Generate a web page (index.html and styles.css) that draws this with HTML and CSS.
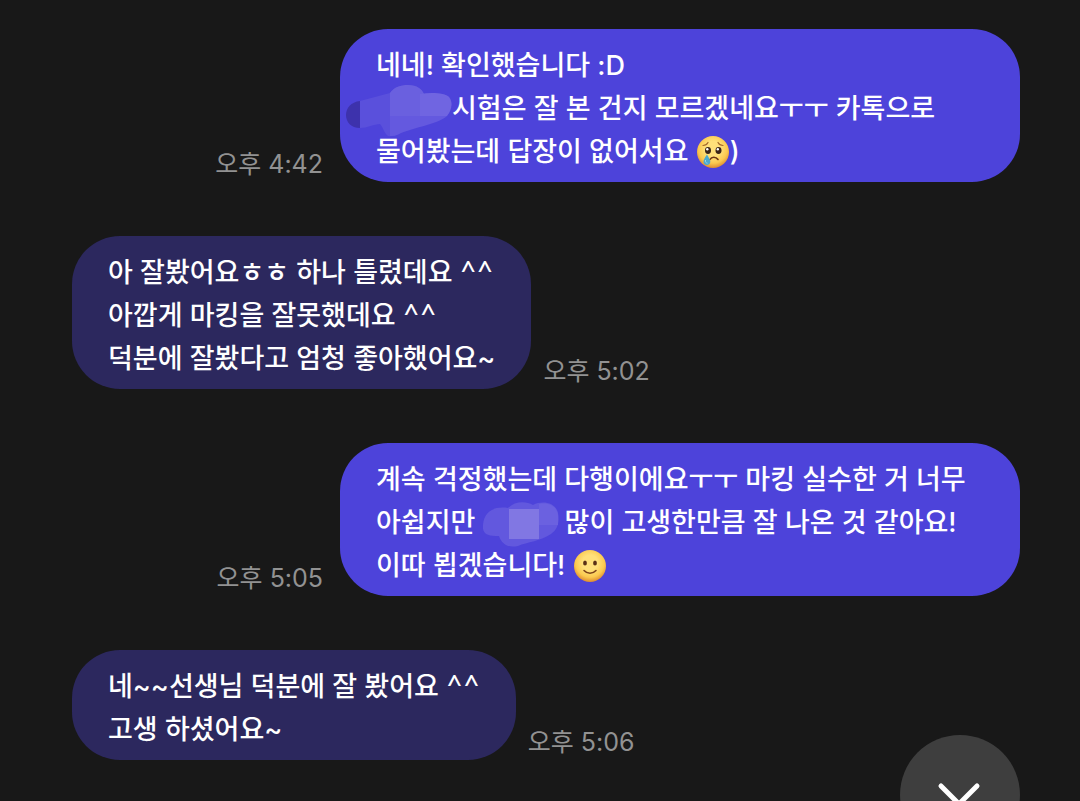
FILE: index.html
```html
<!DOCTYPE html>
<html lang="ko">
<head>
    <meta charset="UTF-8">
    <meta name="viewport" content="width=device-width, initial-scale=1.0">
    <title>채팅</title>
    <link rel="stylesheet" href="styles.css">
</head>
<body>
    <main class="chat">
        <div class="message mine">
            <p class="bubble">네네! 확인했습니다 :D<br><svg class="mask mask-start" viewBox="0 0 106 52" aria-hidden="true">
                    <path fill="#3d32ac" d="M14 16C5 17 0 23 0 30s5 13 14 13z"/>
                    <path fill="#5a50dc" d="M14 16L44 8c4-6 11-8 18-8 9 0 14 4 16 9 10-1 21-1 25 3 4 4 3 11-1 15-9 10-31 14-47 20-5 4-10 5-13 4-4-3-5-9-8-12-6 0-13 4-20 4z"/>
                    <path fill="#6a60df" d="M44 8c4-6 11-8 18-8 9 0 14 4 16 9l-4 2v20H44z"/>
                    <path fill="#7065e1" d="M74 9c12-2 25-1 29 3 4 5 3 13-2 19H74z"/>
                    <path fill="#6459df" d="M44 31h57c-9 8-31 11-46 17-5 3-8 3-11 3z"/>
                </svg>시험은 잘 본 건지 모르겠네요ㅜㅜ 카톡으로<br>물어봤는데 답장이 없어서요 <svg class="emoji" viewBox="0 0 32 32" role="img" aria-label="우는 얼굴">
                    <defs>
                        <radialGradient id="face" cx="0.5" cy="0.4" r="0.6">
                            <stop offset="0.4" stop-color="#ffe07a"/>
                            <stop offset="0.75" stop-color="#fbc94f"/>
                            <stop offset="1" stop-color="#dd8b32"/>
                        </radialGradient>
                    </defs>
                    <circle cx="16" cy="16" r="16" fill="url(#face)"/>
                    <ellipse cx="11" cy="14.500" rx="3" ry="3.400" fill="#3a2418"/>
                    <ellipse cx="21.500" cy="14.500" rx="3" ry="3.400" fill="#3a2418"/>
                    <circle cx="10.300" cy="13.200" r="1.200" fill="#fff"/>
                    <circle cx="20.800" cy="13.200" r="1.200" fill="#fff"/>
                    <path d="M6 9.500c2 0 4-1 5-3M26 9.500c-2 0-4-1-5-3" fill="none" stroke="#a5692a" stroke-width="1.200" stroke-linecap="round"/>
                    <path d="M13 23.500c1.500-3 6-3 8 0" fill="none" stroke="#6b3516" stroke-width="1.600" stroke-linecap="round"/>
                    <path d="M10 18.500c-2 3-3.500 5-3.500 7a3.400 3.400 0 0 0 6.800 0c0-2-1.800-4-3.300-7z" fill="#4ba9cf"/>
                    <path d="M8.500 24c-.5 2 .5 3 2 3.200" fill="none" stroke="#9bd8ea" stroke-width="1"/>
                </svg>)</p>
            <time class="time" datetime="16:42">오후 4:42</time>
        </div>

        <div class="message">
            <p class="bubble">아 잘봤어요ㅎㅎ 하나 틀렸데요 <span class="smile">^^</span><br>아깝게 마킹을 잘못했데요 <span class="smile">^^</span><br>덕분에 잘봤다고 엄청 좋아했어요~</p>
            <time class="time" datetime="17:02">오후 5:02</time>
        </div>

        <div class="message mine">
            <p class="bubble">계속 걱정했는데 다행이에요ㅜㅜ 마킹 실수한 거 너무<br>아쉽지만 <svg class="mask mask-middle" viewBox="0 0 76 46" aria-hidden="true">
                    <path fill="#6258de" d="M0 23C1 10 10 4 25 6 32-1 43-1 50 3c10-5 23-2 25 8 2 10-1 17-7 21-10 7-24 8-33 12-9 2-16-1-19-10C6 34-1 33 0 23z"/>
                    <path fill="#6b61e0" d="M56 2c11-2 18 3 19 11v10H56z"/>
                    <path fill="#8177e3" d="M26 7h30v30H26z"/>
                </svg>많이 고생한만큼 잘 나온 것 같아요!<br>이따 뵙겠습니다! <svg class="emoji" viewBox="0 0 32 32" role="img" aria-label="웃는 얼굴">
                    <circle cx="16" cy="16" r="16" fill="url(#face)"/>
                    <ellipse cx="11" cy="13" rx="1.900" ry="2.500" fill="#5a3016"/>
                    <ellipse cx="21" cy="13" rx="1.900" ry="2.500" fill="#5a3016"/>
                    <path d="M10 20.500c3 3.500 9 3.500 12 0" fill="none" stroke="#7c431a" stroke-width="1.500" stroke-linecap="round"/>
                </svg></p>
            <time class="time" datetime="17:05">오후 5:05</time>
        </div>

        <div class="message">
            <p class="bubble">네~~선생님 덕분에 잘 봤어요 <span class="smile">^^</span><br>고생 하셨어요~</p>
            <time class="time" datetime="17:06">오후 5:06</time>
        </div>
    </main>

    <button class="scroll-down" type="button" aria-label="맨 아래로">
        <svg viewBox="0 0 48 32" aria-hidden="true">
            <path d="M5 8l18 18L41 8" fill="none" stroke="#fff" stroke-width="5" stroke-linecap="round" stroke-linejoin="round"/>
        </svg>
    </button>
</body>
</html>
```
FILE: styles.css
```css
body {
    margin: 0;
    background-color: #181818;
    color: #fff;
    font-family: Inter, "Noto Sans CJK KR", sans-serif;
    font-size: 27px;
    font-weight: 500;
    line-height: 43px;
    overflow: hidden;
}

.chat {
    display: flex;
    flex-direction: column;
    gap: 54px;
    padding: 29px 60px 40px 72px;
}

.message {
    display: flex;
    align-items: flex-end;
    gap: 12px;
}

/* Mensajes propios a la derecha */
.mine {
    flex-direction: row-reverse;
    gap: 17px;
}

.bubble {
    box-sizing: border-box;
    max-width: 680px;
    margin: 0;
    padding: 15px 36px 9px;
    border-radius: 48px;
    background-color: #2c285e;
}

.mine .bubble {
    width: 680px;
    background-color: #4d43da;
}

.smile {
    font-family: Lato, sans-serif;
    font-size: 29px;
    font-weight: 400;
    line-height: 1;
}

.time {
    flex-shrink: 0;
    color: #929292;
    font-size: 25px;
    font-weight: 400;
    line-height: 36px;
}

.emoji {
    width: 32px;
    height: 32px;
    margin: -8px 1px;
    vertical-align: 1px;
}

.mask {
    vertical-align: middle;
}

.mask-start {
    width: 106px;
    height: 52px;
    margin: -8px 0 -8px -30px;
}

.mask-middle {
    width: 76px;
    height: 46px;
    margin: -4px 6px -4px 0;
}

.scroll-down {
    position: fixed;
    right: 60px;
    bottom: -54px;
    width: 120px;
    height: 120px;
    padding: 0;
    border: none;
    border-radius: 50%;
    background-color: #3e3e3e;
    cursor: pointer;
}

.scroll-down svg {
    width: 48px;
    height: 32px;
}
```
